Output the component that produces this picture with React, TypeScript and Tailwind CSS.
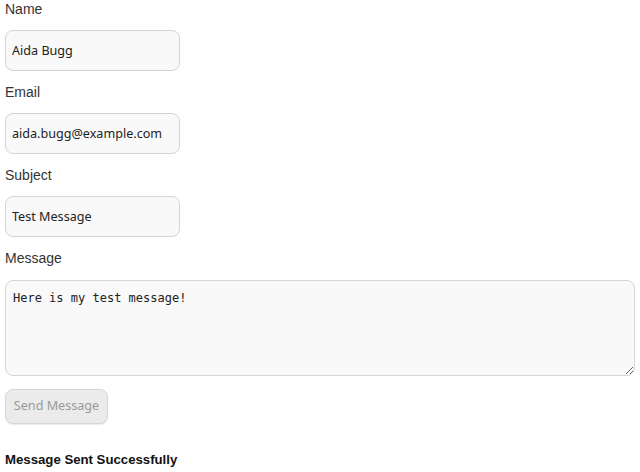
export default function App() {
  const label = "block h-[18px] text-[14px] leading-[18px] text-[#333] font-['Liberation_Sans',Arial,sans-serif]";
  const input =
    "block mt-3 mb-3 w-[175px] h-[41px] rounded-lg border border-[#d4d4d4] bg-[#f9f9f9] px-[6px] text-[12.6px] text-[#222] font-['Noto_Sans',Tahoma,sans-serif] outline-none";

  return (
    <div className="bg-white w-[640px] h-[472px] px-[5px] font-['Liberation_Sans',Arial,sans-serif]">
      <form onSubmit={(e) => e.preventDefault()}>
        <label className={label}>Name</label>
        <input className={input} defaultValue="Aida Bugg" />
        <label className={label}>Email</label>
        <input className={input} defaultValue="aida.bugg@example.com" />
        <label className={label}>Subject</label>
        <input className={input} defaultValue="Test Message" />
        <label className={label}>Message</label>
        <textarea
          className="block mt-[13px] w-[630px] h-[96px] rounded-lg border border-[#d4d4d4] bg-[#f9f9f9] px-[7px] py-[9px] text-[12px] leading-[16px] text-[#222] font-['DejaVu_Sans_Mono',Consolas,monospace] outline-none"
          defaultValue="Here is my test message!"
        />
        <button
          type="submit"
          disabled
          className="block mt-[13px] h-[35px] w-[103px] rounded-lg border border-[#d6d6d6] bg-[#ebebeb] text-[12.6px] text-[#9a9a9a] font-['Noto_Sans',Tahoma,sans-serif] shadow-[0_1px_1px_rgba(0,0,0,0.08)]"
        >
          Send Message
        </button>
      </form>
      <p className="mt-[26px] text-[13.2px] font-bold text-[#111]">Message Sent Successfully</p>
    </div>
  );
}
